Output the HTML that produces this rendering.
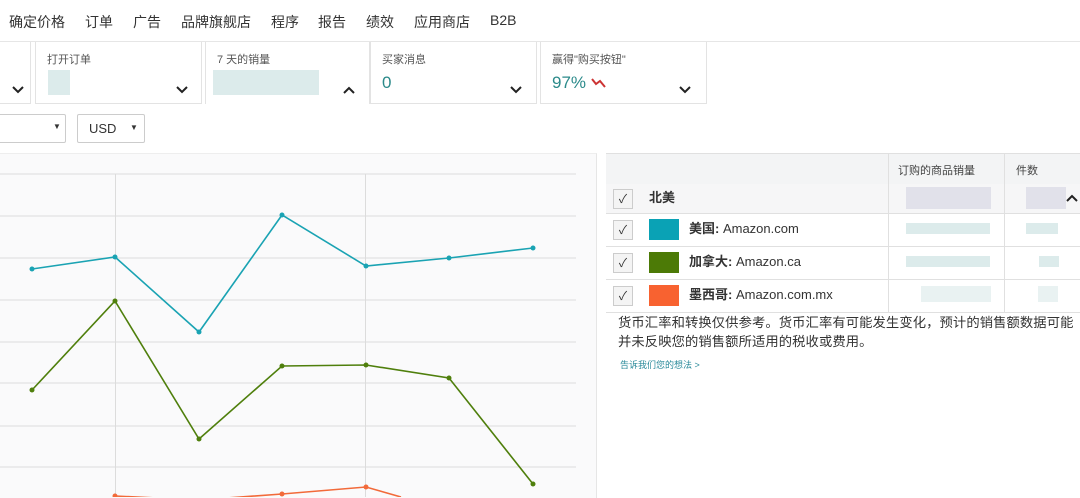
<!DOCTYPE html><html><head><meta charset="utf-8"><style>
body{margin:0;width:1080px;height:497px;overflow:hidden;background:#fff;font-family:"Liberation Sans","Noto Sans CJK SC",sans-serif;color:#333;position:relative}
.a{position:absolute}
.nav{font-size:14px;top:12px;color:#333}
.card{position:absolute;top:42px;height:61px;border:1px solid #e3e3e3;border-top:none;background:#fff}
.lbl{position:absolute;top:9px;left:11px;font-size:11px;color:#555}
.val{position:absolute;top:31px;left:11px;font-size:17px;color:#2b8a8a}
.chev{position:absolute;top:44px}
.blur{position:absolute;background:#d3e6e6;opacity:.8}
.row{position:absolute;left:606px;width:474px;border-bottom:1px solid #e0e0e0;background:#fff}
.cb{position:absolute;left:7px;width:18px;height:18px;border:1px solid #ccc;background:#f4f4f4;font-size:12px;text-align:center;line-height:18px;color:#333}
.sw{position:absolute;left:43px;width:30px;height:21px}
.nm{position:absolute;left:83px;font-size:13px;color:#333;line-height:16px}
</style></head><body>
<div class="a" style="left:0;top:41px;width:1080px;border-top:1px solid #e6e6e6"></div>
<span class="a nav" style="left:9px">确定价格</span>
<span class="a nav" style="left:85px">订单</span>
<span class="a nav" style="left:133px">广告</span>
<span class="a nav" style="left:181px">品牌旗舰店</span>
<span class="a nav" style="left:271px">程序</span>
<span class="a nav" style="left:318px">报告</span>
<span class="a nav" style="left:366px">绩效</span>
<span class="a nav" style="left:414px">应用商店</span>
<span class="a nav" style="left:490px">B2B</span>

<div class="card" style="left:-2px;width:32px;border-left:none"><svg class="chev" style="left:14px" width="12" height="8"><polyline points="1,1 6,6 11,1" fill="none" stroke="#222" stroke-width="2"/></svg></div>
<div class="card" style="left:35px;width:165px"><div class="lbl">打开订单</div><div class="blur" style="left:12px;top:28px;width:22px;height:25px"></div><svg class="chev" style="left:140px" width="12" height="8"><polyline points="1,1 6,6 11,1" fill="none" stroke="#222" stroke-width="2"/></svg></div>
<div class="card" style="left:205px;width:163px;border-bottom:none;height:62px"><div class="lbl">7 天的销量</div><div class="blur" style="left:7px;top:28px;width:106px;height:25px"></div><svg class="chev" style="left:137px" width="12" height="8"><polyline points="1,7 6,2 11,7" fill="none" stroke="#222" stroke-width="2"/></svg></div>
<div class="card" style="left:370px;width:165px"><div class="lbl">买家消息</div><div class="val">0</div><svg class="chev" style="left:139px" width="12" height="8"><polyline points="1,1 6,6 11,1" fill="none" stroke="#222" stroke-width="2"/></svg></div>
<div class="card" style="left:540px;width:165px"><div class="lbl">赢得"购买按钮"</div><div class="val">97% <svg width="18" height="12"><polyline points="1,3 5,8 9,5 14,11" fill="none" stroke="#c33" stroke-width="2"/></svg></div><svg class="chev" style="left:138px" width="12" height="8"><polyline points="1,1 6,6 11,1" fill="none" stroke="#222" stroke-width="2"/></svg></div>

<div class="a" style="left:-2px;top:114px;width:66px;height:27px;border:1px solid #ccc;border-radius:2px"><span class="a" style="left:54px;top:7px;font-size:8px">▼</span></div>
<div class="a" style="left:77px;top:114px;width:66px;height:27px;border:1px solid #ccc;border-radius:2px;font-size:13px"><span class="a" style="left:11px;top:6px">USD</span><span class="a" style="left:52px;top:8px;font-size:8px">▼</span></div>

<div class="a" style="left:0;top:153px;width:596px;height:344px;background:#fafafb;border-right:1px solid #e6e6e6;border-top:1px solid #eee"></div>
<svg class="a" style="left:0;top:0" width="600" height="497">
<g stroke="#dcdcdc" stroke-width="1">
<line x1="0" y1="174" x2="576" y2="174"/><line x1="0" y1="216" x2="576" y2="216"/><line x1="0" y1="258" x2="576" y2="258"/><line x1="0" y1="300" x2="576" y2="300"/><line x1="0" y1="342" x2="576" y2="342"/><line x1="0" y1="383" x2="576" y2="383"/><line x1="0" y1="426" x2="576" y2="426"/><line x1="0" y1="467" x2="576" y2="467"/>
<line x1="115.5" y1="174" x2="115.5" y2="497"/><line x1="365.5" y1="174" x2="365.5" y2="497"/></g>
<g fill="none" stroke-width="1.6">
<polyline stroke="#1aa3b3" points="32,269 115,257 199,332 282,215 366,266 449,258 533,248"/>
<polyline stroke="#4f7f0c" points="32,390 115,301 199,439 282,366 366,365 449,378 533,484"/>
<polyline stroke="#f26a3a" points="115,496 199,500 282,494 366,487 401,497"/></g>
<g fill="#1aa3b3"><circle cx="32" cy="269" r="2.5"/><circle cx="115" cy="257" r="2.5"/><circle cx="199" cy="332" r="2.5"/><circle cx="282" cy="215" r="2.5"/><circle cx="366" cy="266" r="2.5"/><circle cx="449" cy="258" r="2.5"/><circle cx="533" cy="248" r="2.5"/></g>
<g fill="#4f7f0c"><circle cx="32" cy="390" r="2.5"/><circle cx="115" cy="301" r="2.5"/><circle cx="199" cy="439" r="2.5"/><circle cx="282" cy="366" r="2.5"/><circle cx="366" cy="365" r="2.5"/><circle cx="449" cy="378" r="2.5"/><circle cx="533" cy="484" r="2.5"/></g>
<g fill="#f26a3a"><circle cx="115" cy="496" r="2.5"/><circle cx="282" cy="494" r="2.5"/><circle cx="366" cy="487" r="2.5"/></g>
</svg>

<div class="row" style="top:153px;height:30px;background:#f3f4f5;border-top:1px solid #e0e0e0"><span class="a" style="left:292px;top:8px;font-size:11px;color:#444">订购的商品销量</span><span class="a" style="left:410px;top:8px;font-size:11px;color:#444">件数</span></div>
<div class="row" style="top:184px;height:29px;background:#f6f6f7"><div class="cb" style="top:5px">✓</div><span class="a" style="left:43px;top:6px;font-size:13px;font-weight:bold;line-height:16px">北美</span><div class="blur" style="left:300px;top:3px;width:85px;height:22px;opacity:.5;background:#ccd"></div><div class="blur" style="left:420px;top:3px;width:40px;height:22px;opacity:.5;background:#ccd"></div><svg class="a" style="left:460px;top:10px" width="12" height="8"><polyline points="1,7 6,2 11,7" fill="none" stroke="#222" stroke-width="2"/></svg></div>
<div class="row" style="top:214px;height:32px"><div class="cb" style="top:6px">✓</div><div class="sw" style="top:5px;background:#0aa2b5"></div><span class="nm" style="top:7px"><b>美国:</b> Amazon.com</span><div class="blur" style="left:300px;top:9px;width:84px;height:11px"></div><div class="blur" style="left:420px;top:9px;width:32px;height:11px"></div></div>
<div class="row" style="top:247px;height:32px"><div class="cb" style="top:6px">✓</div><div class="sw" style="top:5px;background:#4c7a06"></div><span class="nm" style="top:7px"><b>加拿大:</b> Amazon.ca</span><div class="blur" style="left:300px;top:9px;width:84px;height:11px"></div><div class="blur" style="left:433px;top:9px;width:20px;height:11px"></div></div>
<div class="row" style="top:280px;height:32px"><div class="cb" style="top:6px">✓</div><div class="sw" style="top:5px;background:#f86230"></div><span class="nm" style="top:7px"><b>墨西哥:</b> Amazon.com.mx</span><div class="blur" style="left:315px;top:6px;width:70px;height:16px;opacity:.5"></div><div class="blur" style="left:432px;top:6px;width:20px;height:16px;opacity:.5"></div></div>
<div class="a" style="left:888px;top:154px;height:158px;border-left:1px solid #e0e0e0"></div>
<div class="a" style="left:1004px;top:154px;height:158px;border-left:1px solid #e0e0e0"></div>
<div class="a" style="left:618px;top:313px;width:470px;font-size:13.3px;letter-spacing:0.1px;line-height:19px;color:#333;white-space:nowrap">货币汇率和转换仅供参考。货币汇率有可能发生变化，预计的销售额数据可能<br>并未反映您的销售额所适用的税收或费用。</div>
<div class="a" style="left:620px;top:358px;font-size:9px;color:#2a8a9a">告诉我们您的想法 &gt;</div>
</body></html>
